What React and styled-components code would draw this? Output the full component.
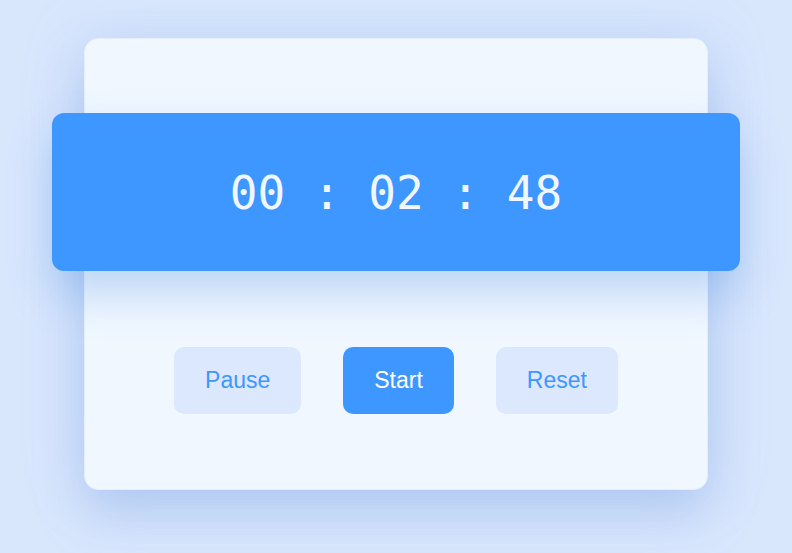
import React from 'react';
import styled, { createGlobalStyle } from 'styled-components';

const GlobalStyle = createGlobalStyle`
  html, body {
    margin: 0;
    padding: 0;
    background: #d9e7fd;
  }
  body {
    font-family: "Liberation Sans", Arial, sans-serif;
  }
`;

const Page = styled.div`
  width: 792px;
  height: 553px;
  display: flex;
  justify-content: center;
  align-items: flex-start;
  padding-top: 38px;
  box-sizing: border-box;
  overflow: hidden;
`;

const Card = styled.div`
  width: 624px;
  height: 452px;
  box-sizing: border-box;
  background: #f0f7ff;
  border: 1px solid #e3eefc;
  border-radius: 14px;
  box-shadow: 0 24px 48px rgba(120, 160, 225, 0.35), 0 0 60px rgba(150, 185, 240, 0.25);
  display: flex;
  flex-direction: column;
  padding-top: 74px;
`;

const Display = styled.div`
  margin: 0 -33px;
  height: 158px;
  background: #3d97ff;
  border-radius: 12px;
  box-shadow: 0 22px 44px rgba(70, 140, 225, 0.3);
  display: flex;
  align-items: center;
  justify-content: center;
  color: #f0f7ff;
  font-family: "DejaVu Sans Mono", monospace;
  font-size: 46px;
  white-space: pre;
  padding-top: 2px;
  box-sizing: border-box;
`;

const Controls = styled.div`
  display: flex;
  justify-content: center;
  gap: 42px;
  margin-top: 76px;
`;

const Button = styled.button`
  height: 67px;
  padding: 0 31px;
  border: none;
  border-radius: 10px;
  font-family: "Liberation Sans", Arial, sans-serif;
  font-size: 23px;
  background: ${p => (p.$primary ? '#3d97ff' : '#dbe8fd')};
  color: ${p => (p.$primary ? '#ffffff' : '#4096ff')};
  cursor: pointer;
`;

export default function App() {
  return (
    <>
      <GlobalStyle />
      <Page>
        <Card>
          <Display>00 : 02 : 48</Display>
          <Controls>
            <Button>Pause</Button>
            <Button $primary>Start</Button>
            <Button>Reset</Button>
          </Controls>
        </Card>
      </Page>
    </>
  );
}
